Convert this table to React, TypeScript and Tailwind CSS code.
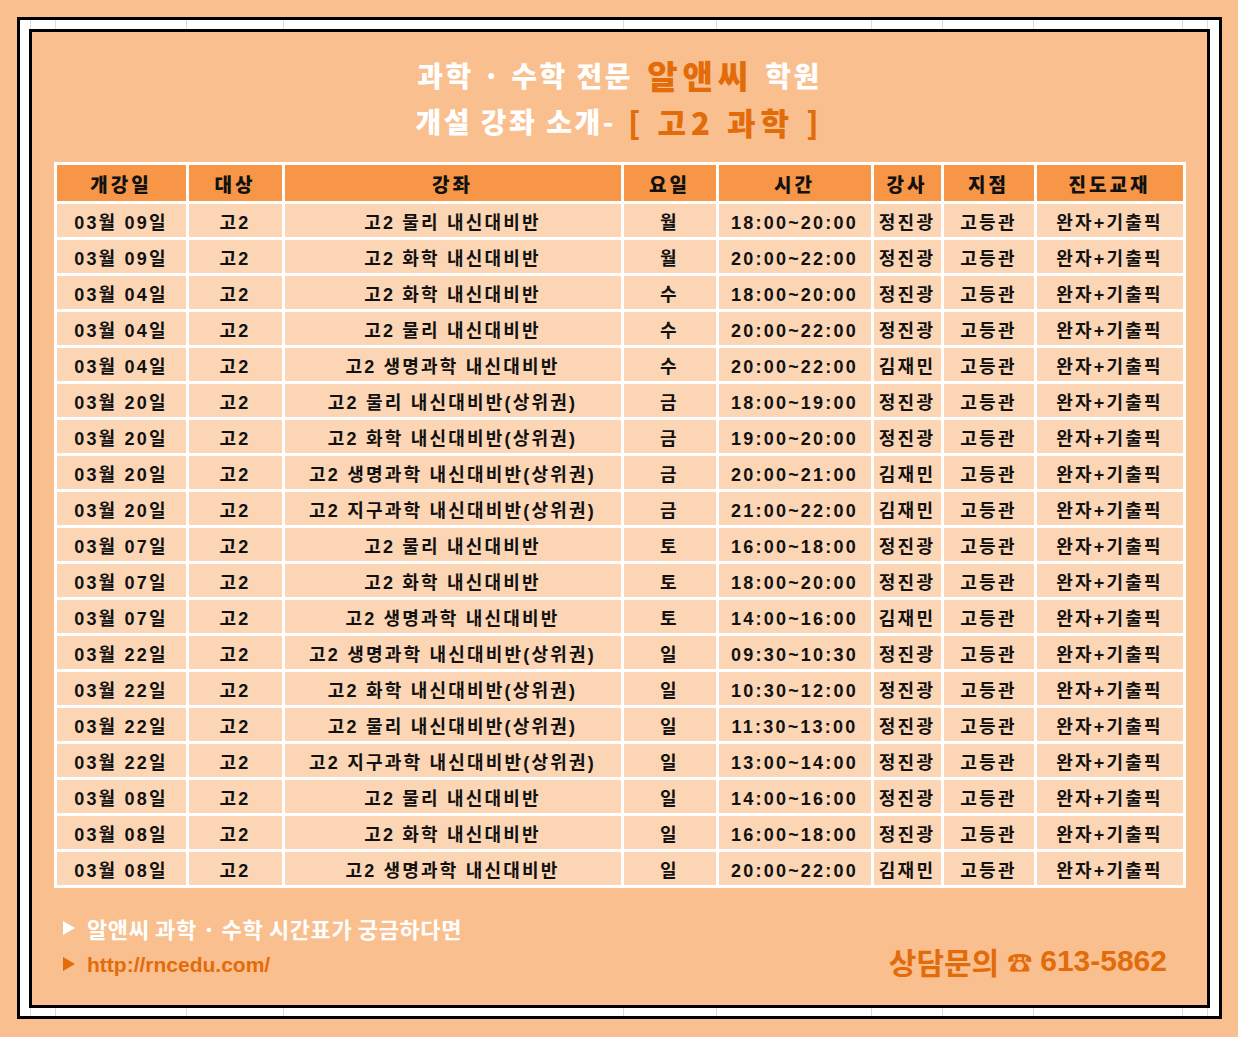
import React from "react";

type Row = [string, string, string, string, string, string, string, string];

const rows: Row[] = [
  ["03월 09일", "고2", "고2 물리 내신대비반", "월", "18:00~20:00", "정진광", "고등관", "완자+기출픽"],
  ["03월 09일", "고2", "고2 화학 내신대비반", "월", "20:00~22:00", "정진광", "고등관", "완자+기출픽"],
  ["03월 04일", "고2", "고2 화학 내신대비반", "수", "18:00~20:00", "정진광", "고등관", "완자+기출픽"],
  ["03월 04일", "고2", "고2 물리 내신대비반", "수", "20:00~22:00", "정진광", "고등관", "완자+기출픽"],
  ["03월 04일", "고2", "고2 생명과학 내신대비반", "수", "20:00~22:00", "김재민", "고등관", "완자+기출픽"],
  ["03월 20일", "고2", "고2 물리 내신대비반(상위권)", "금", "18:00~19:00", "정진광", "고등관", "완자+기출픽"],
  ["03월 20일", "고2", "고2 화학 내신대비반(상위권)", "금", "19:00~20:00", "정진광", "고등관", "완자+기출픽"],
  ["03월 20일", "고2", "고2 생명과학 내신대비반(상위권)", "금", "20:00~21:00", "김재민", "고등관", "완자+기출픽"],
  ["03월 20일", "고2", "고2 지구과학 내신대비반(상위권)", "금", "21:00~22:00", "김재민", "고등관", "완자+기출픽"],
  ["03월 07일", "고2", "고2 물리 내신대비반", "토", "16:00~18:00", "정진광", "고등관", "완자+기출픽"],
  ["03월 07일", "고2", "고2 화학 내신대비반", "토", "18:00~20:00", "정진광", "고등관", "완자+기출픽"],
  ["03월 07일", "고2", "고2 생명과학 내신대비반", "토", "14:00~16:00", "김재민", "고등관", "완자+기출픽"],
  ["03월 22일", "고2", "고2 생명과학 내신대비반(상위권)", "일", "09:30~10:30", "정진광", "고등관", "완자+기출픽"],
  ["03월 22일", "고2", "고2 화학 내신대비반(상위권)", "일", "10:30~12:00", "정진광", "고등관", "완자+기출픽"],
  ["03월 22일", "고2", "고2 물리 내신대비반(상위권)", "일", "11:30~13:00", "정진광", "고등관", "완자+기출픽"],
  ["03월 22일", "고2", "고2 지구과학 내신대비반(상위권)", "일", "13:00~14:00", "정진광", "고등관", "완자+기출픽"],
  ["03월 08일", "고2", "고2 물리 내신대비반", "일", "14:00~16:00", "정진광", "고등관", "완자+기출픽"],
  ["03월 08일", "고2", "고2 화학 내신대비반", "일", "16:00~18:00", "정진광", "고등관", "완자+기출픽"],
  ["03월 08일", "고2", "고2 생명과학 내신대비반", "일", "20:00~22:00", "김재민", "고등관", "완자+기출픽"],
];

const headers = ["개강일", "대상", "강좌", "요일", "시간", "강사", "지점", "진도교재"];

const segs = [11, 25, 131, 97, 340, 93, 155, 71, 91, 149, 25];

function Band({ h }: { h: string }) {
  return (
    <div className={`${h} flex shrink-0`}>
      {segs.map((w, i) => (
        <div key={i} className="shrink-0 border-r border-[#dcdcdc] h-full" style={{ width: w }} />
      ))}
      <div className="flex-1" />
    </div>
  );
}

function Tri({ color }: { color: string }) {
  return (
    <svg width="14" height="16" viewBox="0 0 14 16" className="shrink-0">
      <polygon points="1,1 13,8 1,15" fill={color} />
    </svg>
  );
}

export default function App() {
  return (
    <div className="w-[1238px] h-[1037px] bg-[#FABF8F] pt-[17px] pl-[17px] overflow-hidden">
      <div className="w-[1205px] h-[1002px] border-[3px] border-black bg-white flex flex-col">
        <Band h="h-[9px]" />
        <div className="flex-1 flex">
          <div className="w-[9px] shrink-0" />
          <div className="flex-1 border-[3px] border-black bg-[#FABF8F] flex flex-col">
            {/* Title */}
            <div className="pt-[21px] [font-family:'Noto_Sans_CJK_KR',sans-serif] font-black leading-none">
              <div className="h-[44px] flex items-center justify-center text-white text-[28px] tracking-[2.5px]">
                <span>과학 · 수학 전문</span>
                <span className="text-[#E26B0A] text-[33px] tracking-[5px] ml-[14px] mr-[12px]">알앤씨</span>
                <span>학원</span>
              </div>
              <div className="h-[48px] flex items-center justify-center text-white text-[28px] tracking-[2.5px]">
                <span>개설 강좌 소개-</span>
                <span className="text-[#E26B0A] text-[31px] tracking-[5px] ml-[12px]">[ 고2 과학 ]</span>
              </div>
            </div>

            {/* Table */}
            <div className="mt-[17px] mx-auto bg-white p-[3px] grid grid-cols-[129px_93px_336px_92px_152px_67px_90px_146px] gap-[3px] [font-family:'Liberation_Sans','Noto_Sans_CJK_KR',sans-serif] text-[#111] font-bold">
              {headers.map((h) => (
                <div
                  key={h}
                  className="h-[36px] pt-[2px] bg-[#F79646] flex items-center justify-center text-[19px] font-black tracking-[3px] [font-family:'Noto_Sans_CJK_KR',sans-serif]"
                >
                  {h}
                </div>
              ))}
              {rows.map((r, ri) =>
                r.map((c, ci) => (
                  <div
                    key={`${ri}-${ci}`}
                    className="h-[33px] pt-[6px] bg-[#FCD5B4] flex items-center justify-center text-[18px] tracking-[2.2px] whitespace-nowrap"
                  >
                    {c}
                  </div>
                ))
              )}
            </div>

            {/* Footer */}
            <div className="mt-[22px] flex justify-between items-end pl-[30px] pr-[40px] [font-family:'Noto_Sans_CJK_KR',sans-serif] font-bold">
              <div className="flex flex-col">
                <div className="h-[36px] flex items-center gap-[11px] text-white text-[22px] tracking-[0.6px] leading-none">
                  <Tri color="#ffffff" />
                  <span>알앤씨 과학 · 수학 시간표가 궁금하다면</span>
                </div>
                <div className="h-[36px] flex items-center gap-[11px] text-[#E26B0A] text-[21px] leading-none">
                  <Tri color="#E26B0A" />
                  <span className="[font-family:'Liberation_Sans',sans-serif]">http://rncedu.com/</span>
                </div>
              </div>
              <div className="h-[40px] mb-[1px] flex items-center text-[#E26B0A] text-[30px] leading-none">
                <span>상담문의</span>
                <span className="mx-[8px] text-[25px]">☎</span>
                <span className="[font-family:'Liberation_Sans',sans-serif]">613-5862</span>
              </div>
            </div>
          </div>
          <div className="w-[9px] shrink-0" />
        </div>
        <Band h="h-[8px]" />
      </div>
    </div>
  );
}
